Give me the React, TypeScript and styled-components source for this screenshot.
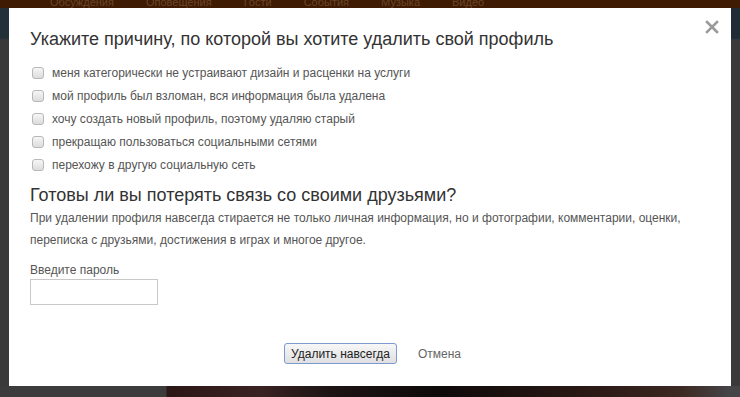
import React from 'react';
import styled, { createGlobalStyle } from 'styled-components';

const GlobalStyle = createGlobalStyle`
  html, body {
    margin: 0;
    padding: 0;
    background: #3b3b3d;
  }
  body {
    font-family: "Liberation Sans", Arial, sans-serif;
  }
`;

const Page = styled.div`
  position: relative;
  width: 740px;
  height: 397px;
  overflow: hidden;
  display: flex;
  flex-direction: column;
`;

const TopNav = styled.div`
  height: 8px;
  flex: none;
  background: #3f1b04;
  display: flex;
  align-items: flex-end;
  overflow: hidden;
  padding-left: 50px;
  gap: 32px;
`;

const NavItem = styled.span`
  font-size: 11px;
  line-height: 14px;
  color: #6b4426;
  white-space: nowrap;
  margin-bottom: -1px;
`;

const Middle = styled.div`
  flex: 1;
  display: flex;
  justify-content: space-between;
`;

const SideStrip = styled.div<{ $top: string }>`
  width: 9px;
  background: linear-gradient(to bottom, ${(p) => p.$top} 0px, ${(p) => p.$top} 30px, #3a3a3b 32px, #3a3a3b 100%);
`;

const BottomStrip = styled.div`
  height: 11px;
  flex: none;
  background: linear-gradient(
    to right,
    #3c3c3c 0px,
    #3c3c3c 166px,
    #2b1716 167px,
    #3a2222 260px,
    #1d1414 330px,
    #0e0a0a 440px,
    #2c1a16 600px,
    #3d2822 680px,
    #454548 731px,
    #454548 740px
  );
`;

const Modal = styled.div`
  position: absolute;
  top: 8px;
  left: 9px;
  width: 722px;
  height: 378px;
  box-sizing: border-box;
  background: #ffffff;
  padding: 20px 21px 0;
  display: flex;
  flex-direction: column;
  color: #333;
`;

const Close = styled.button`
  position: absolute;
  top: 12px;
  right: 12px;
  width: 14px;
  height: 14px;
  padding: 0;
  border: none;
  background: none;
  cursor: pointer;
  display: flex;
`;

const Title = styled.h2`
  margin: 0;
  font-size: 18px;
  line-height: 22px;
  font-weight: normal;
  color: #333;
`;

const Reasons = styled.div`
  margin-top: 11px;
  display: flex;
  flex-direction: column;
`;

const Reason = styled.label`
  display: flex;
  align-items: center;
  height: 23px;
  font-size: 12px;
  color: #555;
  cursor: pointer;
`;

const Box = styled.span`
  width: 10px;
  height: 10px;
  margin: 0 8px 0 2px;
  border: 1px solid #b8b8b8;
  border-radius: 3px;
  background: linear-gradient(to bottom, #f6f6f6, #dcdcdc);
  flex: none;
`;

const Subtitle = styled.h3`
  margin: 8px 0 0;
  font-size: 18px;
  line-height: 22px;
  font-weight: normal;
  color: #333;
`;

const Text = styled.p`
  margin: 1px 0 0;
  font-size: 12px;
  line-height: 22px;
  color: #555;
`;

const Label = styled.div`
  margin-top: 11px;
  font-size: 12px;
  line-height: 16px;
  color: #555;
`;

const Input = styled.input`
  margin-top: 1px;
  width: 128px;
  height: 26px;
  box-sizing: border-box;
  border: 1px solid #c8c8c8;
  padding: 0 4px;
  outline: none;
`;

const Footer = styled.div`
  margin-top: 38px;
  display: flex;
  justify-content: center;
  align-items: center;
  gap: 21px;
  padding-left: 5px;
`;

const DeleteButton = styled.button`
  height: 21px;
  padding: 0 6px;
  font-family: "Liberation Sans", Arial, sans-serif;
  font-size: 12px;
  color: #222;
  border: 1px solid #7b9ad0;
  border-radius: 3px;
  background: linear-gradient(to bottom, #f7f7f7, #e0e0e3);
  cursor: pointer;
`;

const CancelLink = styled.a`
  font-size: 12px;
  color: #666;
  text-decoration: none;
  cursor: pointer;
`;

const reasons = [
  'меня категорически не устраивают дизайн и расценки на услуги',
  'мой профиль был взломан, вся информация была удалена',
  'хочу создать новый профиль, поэтому удаляю старый',
  'прекращаю пользоваться социальными сетями',
  'перехожу в другую социальную сеть',
];

const navItems = ['Обсуждения', 'Оповещения', 'Гости', 'События', 'Музыка', 'Видео'];

const App = (): JSX.Element => {
  return (
    <>
      <GlobalStyle />
      <Page>
        <TopNav>
          {navItems.map((item) => (
            <NavItem key={item}>{item}</NavItem>
          ))}
        </TopNav>
        <Middle>
          <SideStrip $top="#243038" />
          <SideStrip $top="#1f2c36" />
        </Middle>
        <BottomStrip />

        <Modal>
          <Close aria-label="Закрыть">
            <svg width="14" height="14" viewBox="0 0 14 14">
              <path d="M2 2 L12 12 M12 2 L2 12" stroke="#9a9a9a" strokeWidth="2.6" strokeLinecap="square" />
            </svg>
          </Close>
          <Title>Укажите причину, по которой вы хотите удалить свой профиль</Title>
          <Reasons>
            {reasons.map((r) => (
              <Reason key={r}>
                <Box />
                {r}
              </Reason>
            ))}
          </Reasons>
          <Subtitle>Готовы ли вы потерять связь со своими друзьями?</Subtitle>
          <Text>
            При удалении профиля навсегда стирается не только личная информация, но и фотографии, комментарии, оценки,
            переписка с друзьями, достижения в играх и многое другое.
          </Text>
          <Label>Введите пароль</Label>
          <Input type="password" />
          <Footer>
            <DeleteButton>Удалить навсегда</DeleteButton>
            <CancelLink>Отмена</CancelLink>
          </Footer>
        </Modal>
      </Page>
    </>
  );
};

export default App;
